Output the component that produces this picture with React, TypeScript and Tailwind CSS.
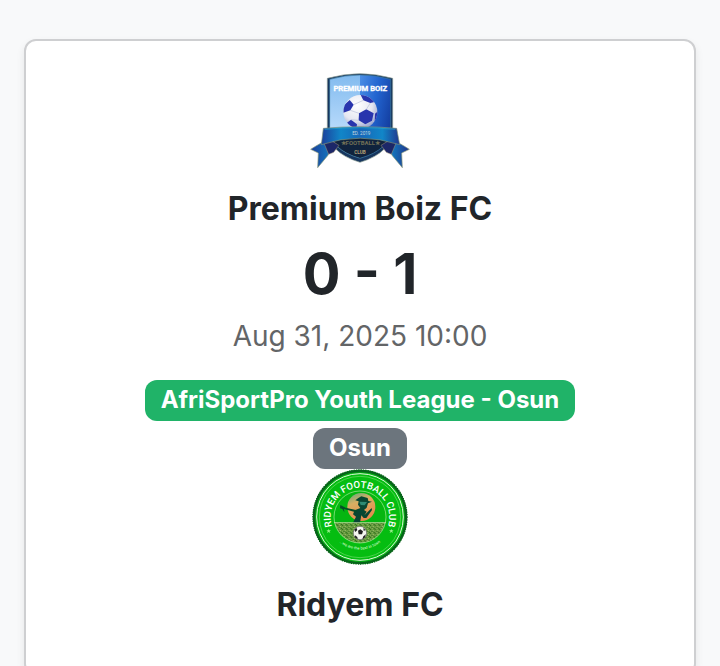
function PremiumCrest() {
  return (
    <svg viewBox="30 21 300 288" className="h-24 w-[100px]" role="img" aria-label="Premium Boiz FC">
      <defs>
        <linearGradient id="sky" x1="0" y1="0" x2="0" y2="1">
          <stop offset="0" stopColor="#7fb9ee" />
          <stop offset="0.6" stopColor="#b4d8fa" />
        </linearGradient>
        <linearGradient id="deep" x1="0" y1="0" x2="1" y2="0.6">
          <stop offset="0" stopColor="#4c8fe6" />
          <stop offset="0.5" stopColor="#2264cf" />
          <stop offset="1" stopColor="#123a9c" />
        </linearGradient>
        <linearGradient id="ribbon" x1="0" y1="0" x2="1" y2="0">
          <stop offset="0" stopColor="#1c3f9a" />
          <stop offset="0.25" stopColor="#1186c8" />
          <stop offset="0.5" stopColor="#1767b8" />
          <stop offset="0.78" stopColor="#1186c8" />
          <stop offset="1" stopColor="#20358c" />
        </linearGradient>
        <radialGradient id="ball" cx="0.4" cy="0.3" r="0.75">
          <stop offset="0" stopColor="#ffffff" />
          <stop offset="0.6" stopColor="#e5e7f1" />
          <stop offset="1" stopColor="#8f9bc9" />
        </radialGradient>
        <clipPath id="shieldClip">
          <path d="M89 43Q180 17 272 43V190Q272 254 180 280Q89 254 89 190Z" />
        </clipPath>
        <clipPath id="ballClip"><circle cx="181" cy="141" r="51" /></clipPath>
      </defs>
      <path d="M82 40Q180 12 278 40V190Q278 262 180 292Q82 262 82 190Z" fill="#17365f" stroke="#8a9b91" strokeWidth="2" />
      <g clipPath="url(#shieldClip)">
        <rect x="85" y="20" width="95" height="270" fill="url(#sky)" />
        <rect x="180" y="20" width="96" height="270" fill="url(#deep)" />
        <path d="M80 220Q180 198 280 220V292H80Z" fill="#10233d" />
      </g>
      <path d="M89 43Q180 17 272 43V190Q272 254 180 280Q89 254 89 190Z" fill="none" stroke="#3d7c9f" strokeWidth="2" />
      <text x="181" y="77" textAnchor="middle" fontSize="23" className="fill-white stroke-white stroke-1 font-['Roboto',sans-serif] font-bold">PREMIUM BOIZ</text>
      <circle cx="181" cy="141" r="51" fill="url(#ball)" />
      <g clipPath="url(#ballClip)" fill="#2935ad">
        <path d="M177 145L199 133L221 145L216 167L196 178L176 166Z" />
        <path d="M129 123L149 105L161 119L151 136L130 143Z" />
        <path d="M181 88L205 91L227 110L211 114L190 106Z" />
        <path d="M141 173L153 164L171 178L168 197H145Z" />
        <path d="M225 146L237 136V167L224 177Z" />
        <path d="M161 119L190 106M199 133L211 114M151 136L177 145M153 164L176 166M196 178L191 194M216 167L226 173" fill="none" stroke="#b8bfda" strokeWidth="2" />
      </g>
      <path d="M86 221L48 243L32 253L55 264L53 308L83 272L98 245Z M274 221L312 243L328 253L305 264L307 308L277 272L262 245Z" fill="url(#ribbon)" stroke="#8c9a78" strokeWidth="2" />
      <path d="M71 232L91 225L117 241L101 262L86 268Z M289 232L269 225L243 241L259 262L274 268Z" fill="#1c2768" stroke="#a29475" strokeWidth="1.5" />
      <path d="M70 190Q180 180 290 190L299 239Q180 200 64 239Z" fill="url(#ribbon)" stroke="#82957a" strokeWidth="2" />
      <path d="M74 193Q180 183 286 193" fill="none" stroke="#27a4c9" strokeWidth="2" />
      <text x="184" y="209" textAnchor="middle" fontSize="14" className="fill-[#c8d7dd] font-['Roboto',sans-serif]">ED. 2019</text>
      <text x="181" y="241" textAnchor="middle" fontSize="18" className="fill-[#706f55] font-['Roboto',sans-serif] font-bold">★FOOTBALL★</text>
      <text x="180" y="266" textAnchor="middle" fontSize="14" className="fill-[#b2a176] font-['Roboto',sans-serif] font-bold">CLUB</text>
    </svg>
  );
}

function RidyemCrest() {
  return (
    <svg viewBox="36 21 288 288" className="size-24" role="img" aria-label="Ridyem FC">
      <defs>
        <linearGradient id="sunset" x1="0" y1="0" x2="0.4" y2="1">
          <stop offset="0" stopColor="#58a982" />
          <stop offset="0.4" stopColor="#d8ae62" />
          <stop offset="1" stopColor="#e58c4e" />
        </linearGradient>
        <pattern id="grass" width="14" height="12" patternUnits="userSpaceOnUse">
          <rect width="14" height="12" fill="#5f9838" />
          <path d="M1 2H4V5H1ZM8 0H11V3H8ZM5 7H8V10H5Z" fill="#a9bd76" />
          <path d="M4 3H7V6H4ZM11 6H14V9H11ZM0 9H3V12H0Z" fill="#326b22" />
        </pattern>
        <clipPath id="fieldClip"><circle cx="180" cy="165" r="78" /></clipPath>
        <path id="clubArc" d="M99 200A88 88 0 1 1 261 200" />
        <path id="mottoArc" d="M108 231A98 98 0 0 0 252 231" />
      </defs>
      <circle cx="180" cy="165" r="141" fill="#05ae13" stroke="#075b15" strokeWidth="4" strokeDasharray="4 3" />
      <circle cx="180" cy="165" r="138" fill="#06b313" stroke="#07651a" strokeWidth="7" />
      <circle cx="180" cy="165" r="130" fill="#05bd11" stroke="#e4f7df" strokeWidth="3" />
      <circle cx="180" cy="165" r="122" fill="none" stroke="#71dd6b" strokeWidth="2" />
      <g clipPath="url(#fieldClip)">
        <rect x="100" y="85" width="160" height="160" fill="#05b611" />
        <rect x="100" y="182" width="160" height="65" fill="url(#grass)" />
      </g>
      <circle cx="180" cy="165" r="78" fill="none" stroke="#aeeea0" strokeWidth="2" />
      <circle cx="184" cy="135" r="42" fill="url(#sunset)" />
      <path d="M159 182L168 164L159 157L164 145L181 138L174 128L176 118L166 115L175 108L184 103L203 108L205 117L216 119L204 124L200 137L192 144L200 149L193 160L215 138L216 144L199 168H191L184 160L180 182Z" fill="#084632" />
      <path d="M178 119L201 120L194 130L182 129Z" fill="#2c8a73" />
      <path d="M121 129L137 137L171 145L167 151L132 141L133 151L127 141L120 139Z" fill="#064d28" />
      <path d="M102 182H258" stroke="#e0e8bd" strokeWidth="2" />
      <circle cx="180" cy="213" r="20" fill="#f4f5ef" stroke="#656565" strokeWidth="2" />
      <path d="M174 206L181 202L189 208L186 217H176Z M163 203L169 197L172 204L166 210Z M190 198L197 205L191 206Z M165 220L172 225L173 232L164 226Z M190 223L198 217L194 227L187 232Z" fill="#222" />
      <path d="M86 201L88 205L93 205L89 208L91 213L86 210L81 213L83 208L79 205L84 205Z M274 201L276 205L281 205L277 208L279 213L274 210L269 213L271 208L267 205L272 205Z" fill="#94ed89" />
      <text fontSize="29" textAnchor="middle" className="fill-white font-['Roboto',sans-serif] font-medium">
        <textPath href="#clubArc" startOffset="50%">RIDYEM FOOTBALL CLUB</textPath>
      </text>
      <text fontSize="12" textAnchor="middle" className="fill-[#dcffd1] font-['Roboto',sans-serif]">
        <textPath href="#mottoArc" startOffset="50%">...we are the best in town</textPath>
      </text>
    </svg>
  );
}

export default function App() {
  return (
    <main className="overflow-hidden bg-[#f8f9fa] px-6 pt-[39px] font-['Inter',sans-serif] text-[#212529]">
      <article className="flex flex-col items-center rounded-xl border-2 border-[#cecfd1] bg-white px-8 pt-[31px] pb-12 text-center shadow-[0_4px_8px_rgba(0,0,0,0.08)]">
        <PremiumCrest />
        <h2 className="mt-5 text-[32px] leading-[42px] font-bold">Premium Boiz FC</h2>
        <p className="mt-2 text-[56px] leading-[72px] font-bold">0 - 1</p>
        <time dateTime="2025-08-31T10:00" className="mt-[6px] text-[28px] leading-10 text-[#636567]">Aug 31, 2025 10:00</time>
        <div className="mt-6 flex flex-col items-center gap-[7px] text-2xl leading-8 font-bold text-white">
          <span className="rounded-xl bg-[#20b368] px-4 pt-1 pb-[5px]">AfriSportPro Youth League - Osun</span>
          <span className="rounded-xl bg-[#6c757d] px-4 pt-1 pb-[5px]">Osun</span>
        </div>
        <RidyemCrest />
        <h2 className="mt-[19px] text-[32px] leading-[42px] font-bold">Ridyem FC</h2>
      </article>
    </main>
  );
}
